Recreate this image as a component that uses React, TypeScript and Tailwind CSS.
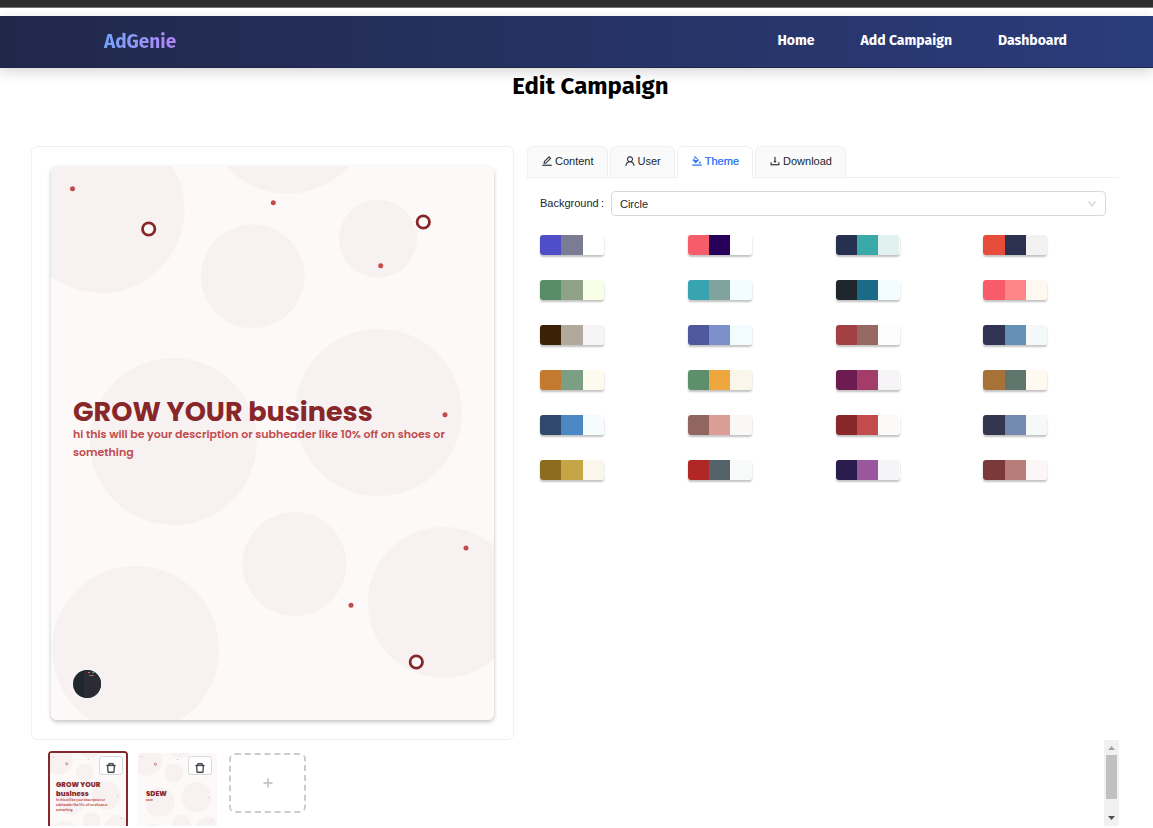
import { useState } from "react";
import {
  AiOutlineEdit,
  AiOutlineUser,
  AiOutlineBgColors,
  AiOutlineDownload,
  AiOutlineDown,
  AiOutlineDelete,
  AiOutlinePlus,
} from "react-icons/ai";

const palettes: string[][] = [
  ["#4f4dc7", "#7b7b93", "#ffffff"],
  ["#f75c6a", "#27005a", "#ffffff"],
  ["#26304f", "#39a9aa", "#e1f1f0"],
  ["#e84d3c", "#2d3150", "#f2f2f2"],
  ["#598c68", "#8fa186", "#f7ffe6"],
  ["#3aa3b1", "#80a39d", "#f3fcff"],
  ["#20262e", "#1b6a87", "#f3fcff"],
  ["#f75c6a", "#ff8686", "#fff8f0"],
  ["#3b2106", "#b1a99c", "#f5f5f5"],
  ["#4f579d", "#7c90cb", "#f2fbfd"],
  ["#a24044", "#976762", "#fcfcfc"],
  ["#303452", "#6590b5", "#f5f8f9"],
  ["#c47930", "#7a9f82", "#fdfaee"],
  ["#5b906a", "#eda73e", "#faf6eb"],
  ["#6c1c51", "#a43c69", "#f6f4f6"],
  ["#a67238", "#5e766b", "#fff9f0"],
  ["#30486b", "#4c88c1", "#f6fbfd"],
  ["#916661", "#da9e94", "#fcf7f7"],
  ["#872729", "#c24b4c", "#fdf9f8"],
  ["#34354e", "#7389b0", "#f6f8f9"],
  ["#8c6c1f", "#c5a545", "#fbf6eb"],
  ["#b12723", "#54626a", "#f8f9f9"],
  ["#2b1c4e", "#99589e", "#f5f4f6"],
  ["#7b3a39", "#b87d78", "#fdf6f6"],
];

const discs = [
  [50, 43.5, 83.5],
  [236.7, -56, 83.5],
  [201.7, 110.3, 51.8],
  [327, 72.7, 39],
  [122.3, 275.5, 83.5],
  [327.5, 246.5, 83.5],
  [243.3, 398, 52],
  [392.5, 436.5, 75.5],
  [84.5, 483.5, 83.5],
];
const dots = [
  [21.5, 22.7],
  [222.3, 36.7],
  [329.7, 99.7],
  [394, 248.7],
  [415, 382],
  [300, 439.3],
];
const rings = [
  [97.7, 63],
  [372.3, 56],
  [365.3, 496],
];

function CircleArt() {
  return (
    <svg viewBox="0 0 443 554" className="block w-full bg-[#fdf9f8]" aria-hidden="true">
      {discs.map(([x, y, r]) => (
        <circle key={`${x}-${y}`} cx={x} cy={y} r={r} fill="#f7f1f1" />
      ))}
      {dots.map(([x, y]) => (
        <circle key={`${x}-${y}`} cx={x} cy={y} r="2.5" fill="#c24b4c" />
      ))}
      {rings.map(([x, y]) => (
        <circle key={`${x}-${y}`} cx={x} cy={y} r="6.2" fill="#fdf9f8" stroke="#872729" strokeWidth="2.8" />
      ))}
    </svg>
  );
}

function Avatar() {
  return (
    <svg viewBox="0 0 28 28" className="size-7" role="img" aria-label="Profile picture">
      <clipPath id="avatar-clip">
        <circle cx="14" cy="14" r="14" />
      </clipPath>
      <g clipPath="url(#avatar-clip)">
        <rect width="28" height="28" fill="#20262e" />
        <rect x="11" width="17" height="28" fill="#2a2b33" />
        <rect x="15" y="2" width="2" height="1" fill="#f75c6a" />
        <rect x="19" y="2" width="4" height="1" fill="#5b906a" />
        <rect x="16" y="5" width="5" height="1" fill="#976762" />
      </g>
    </svg>
  );
}

const tabs = [
  { name: "Content", Icon: AiOutlineEdit },
  { name: "User", Icon: AiOutlineUser },
  { name: "Theme", Icon: AiOutlineBgColors },
  { name: "Download", Icon: AiOutlineDownload },
];

function Slide({ title, text, active }: { title: string; text: string; active?: boolean }) {
  return (
    <div
      className={
        active
          ? "relative w-20 shrink-0 overflow-hidden rounded-sm border-2 border-[#872729]"
          : "relative mt-0.5 w-[79px] shrink-0 overflow-hidden rounded-sm"
      }
    >
      <CircleArt />
      <div className={active ? "absolute inset-x-0 top-[27px] pl-1.5" : "absolute inset-x-0 top-9 px-2"}>
        <p className="max-w-14 text-[7px] leading-[9px] font-extrabold text-[#872729]">{title}</p>
        <p className="max-w-14 text-[3px] leading-[5px] font-semibold text-[#c24b4c]">{text}</p>
      </div>
      <button
        type="button"
        aria-label={`Delete ${title}`}
        className={
          active
            ? "absolute top-[3px] right-[3px] flex h-[19px] w-6 items-center justify-center rounded-[3px] border border-[#d9d9d9] bg-white pt-1"
            : "absolute top-[3px] right-[5px] flex h-[19px] w-6 items-center justify-center rounded-[3px] border border-[#d9d9d9] bg-white pt-1"
        }
      >
        <AiOutlineDelete className="size-3 stroke-[24] text-[#20262e]" />
      </button>
    </div>
  );
}

export default function App() {
  const [tab, setTab] = useState("Theme");
  return (
    <div className="min-h-screen bg-white font-['Liberation_Sans',Arial,sans-serif] text-[11px] text-[#20262e]">
      <div className="mb-2 h-2 border-b border-[#77746f] bg-[#2e2e2e]" />
      <header className="flex h-[52px] items-center justify-between border-b border-[#20284a] bg-linear-to-r from-[#20284a] to-[#2b3c7c] pr-[86px] pb-0.5 pl-[104px] font-['Fira_Sans','Noto_Sans',sans-serif] shadow-[0_4px_12px_rgba(0,0,0,0.16)]">
        <a href="#" className="bg-linear-to-r from-[#6fa4fa] to-[#b184f6] bg-clip-text pt-1 text-[19px] font-bold text-transparent">
          AdGenie
        </a>
        <nav className="flex gap-[46px] text-[14px] font-bold text-white">
          <a href="#">Home</a>
          <a href="#">Add Campaign</a>
          <a href="#">Dashboard</a>
        </nav>
      </header>

      <h1 className="mb-11 ml-7 pt-0.5 text-center font-['Fira_Sans','Noto_Sans',sans-serif] text-[24px] leading-8 font-bold text-black">
        Edit Campaign
      </h1>

      <main className="pr-[34px] pl-[31px]">
        <div className="flex items-start gap-[13px]">
          <section className="w-[483px] shrink-0 rounded-md border border-[#f0f0f0] p-[19px]">
            <div className="relative overflow-hidden rounded-md shadow-[0_2px_4px_rgba(0,0,0,0.24)]">
              <CircleArt />
              <div className="absolute inset-0 flex flex-col justify-center px-[22px] pb-7 font-['Poppins','Inter',sans-serif]">
                <h2 className="text-[27px] leading-[27px] font-bold text-[#872729]">GROW YOUR business</h2>
                <p className="text-[11px] leading-[18px] font-semibold text-[#c24b4c]">
                  hi this will be your description or subheader like 10% off on shoes or something
                </p>
              </div>
              <div className="absolute bottom-[22px] left-[22px]">
                <Avatar />
              </div>
            </div>
          </section>

          <section className="min-w-0 flex-1">
            <div role="tablist" className="flex h-8 gap-0.5 border-b border-[#f0f0f0]">
              {tabs.map(({ name, Icon }) => (
                <button
                  key={name}
                  type="button"
                  role="tab"
                  aria-selected={tab === name}
                  onClick={() => setTab(name)}
                  className={
                    tab === name
                      ? "-mb-px flex items-center gap-0.5 rounded-t-md border border-b-0 border-[#f0f0f0] bg-white px-[13px] pb-[3px] text-[#3b7bfb] [text-shadow:0_0_0.25px_currentcolor]"
                      : "flex items-center gap-0.5 rounded-t-md border border-b-0 border-[#f0f0f0] bg-[#fafafa] px-[13px] pb-0.5"
                  }
                >
                  <Icon className="size-3 stroke-[12]" />
                  {name}
                </button>
              ))}
            </div>
            <div className="px-[13px] pt-[13px]">
              <div className="flex items-center gap-[7px]">
                <label htmlFor="background">Background&thinsp;:</label>
                <div className="relative flex-1">
                  <select
                    id="background"
                    className="h-[25px] w-full appearance-none rounded border border-[#d9d9d9] bg-white pt-px pr-7 pl-2 text-[11px]"
                  >
                    <option>Circle</option>
                  </select>
                  <AiOutlineDown className="pointer-events-none absolute top-2 right-[9px] size-2.5 stroke-[16] text-[#bfbfbf]" />
                </div>
              </div>
              <div className="mt-[19px] -mr-[25px] grid grid-cols-4 gap-y-[25px]">
                {palettes.map((colors, i) => (
                  <button
                    key={i}
                    type="button"
                    aria-label={`Palette ${i + 1}`}
                    className="flex h-5 w-16 overflow-hidden rounded-[3px] shadow-[0_2px_2px_rgba(0,0,0,0.24)]"
                  >
                    {colors.map((c) => (
                      <span key={c} className="h-full flex-1" style={{ backgroundColor: c }} />
                    ))}
                  </button>
                ))}
              </div>
            </div>
          </section>
        </div>

        <div className="flex h-[86px] overflow-hidden">
          <div className="flex flex-1 items-start gap-2.5 pt-[11px] pl-[17px] font-['Poppins','Inter',sans-serif]">
            <Slide
              active
              title="GROW YOUR business"
              text="hi this will be your description or subheader like 10% off on shoes or something"
            />
            <Slide title="SDEW" text="sww" />
            <button
              type="button"
              aria-label="Add slide"
              className="mt-0.5 ml-0.5 flex h-[60px] w-[77px] items-center justify-center rounded-md border-2 border-dashed border-[#cccccc] text-[#c4c4c4]"
            >
              <AiOutlinePlus className="size-3 stroke-[70]" />
            </button>
          </div>
          <div className="flex w-[15px] flex-col items-center bg-[#f1f1f1] py-1.5">
            <svg viewBox="0 0 7 4" className="h-1 w-[7px]" aria-hidden="true">
              <path d="M0 4 3.5 0 7 4Z" fill="#a7a399" />
            </svg>
            <div className="mt-[5px] mb-auto h-11 w-[11px] bg-[#c1c1c1]" />
            <svg viewBox="0 0 7 4" className="h-1 w-[7px]" aria-hidden="true">
              <path d="M0 0 3.5 4 7 0Z" fill="#505050" />
            </svg>
          </div>
        </div>
      </main>
    </div>
  );
}
